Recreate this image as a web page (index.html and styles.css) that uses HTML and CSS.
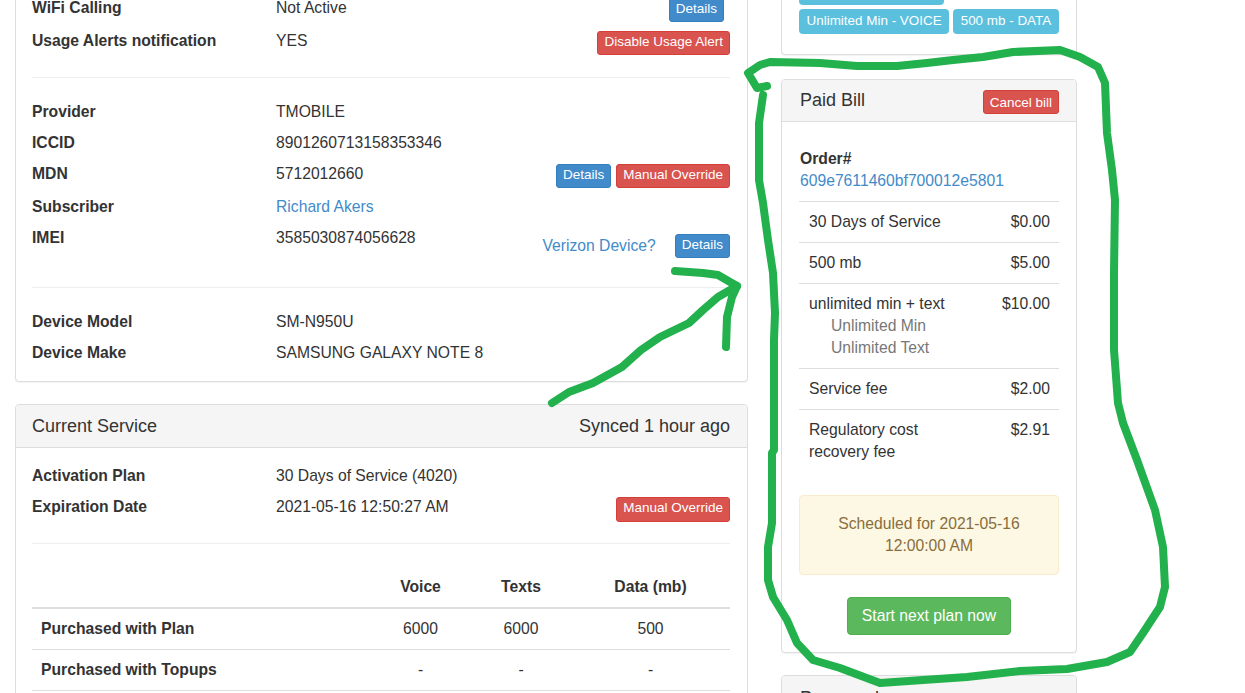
FILE: index.html
```html
<!DOCTYPE html>
<html lang="en">
<head>
<meta charset="utf-8">
<title>Subscriber line</title>
<link rel="stylesheet" href="styles.css">
</head>
<body>
<div class="page">
  <main class="main">
    <section class="panel">
      <div class="panel-body body-top">
        <div class="row row-wifi"><span class="lbl">WiFi Calling</span><span class="val">Not Active</span><span class="act"><a class="btn blue">Details</a></span></div>
        <div class="row row-usage"><span class="lbl">Usage Alerts notification</span><span class="val">YES</span><span class="act"><a class="btn red">Disable Usage Alert</a></span></div>
        <hr class="rule rule-a">
        <div class="row"><span class="lbl">Provider</span><span class="val">TMOBILE</span></div>
        <div class="row"><span class="lbl">ICCID</span><span class="val">8901260713158353346</span></div>
        <div class="row row-mdn"><span class="lbl">MDN</span><span class="val">5712012660</span><span class="act"><a class="btn blue">Details</a><a class="btn red">Manual Override</a></span></div>
        <div class="row"><span class="lbl">Subscriber</span><span class="val"><a class="link">Richard Akers</a></span></div>
        <div class="row row-imei"><span class="lbl">IMEI</span><span class="val">3585030874056628</span><span class="act act-low"><a class="link verizon">Verizon Device?</a><a class="btn blue">Details</a></span></div>
        <hr class="rule rule-b">
        <div class="row"><span class="lbl">Device Model</span><span class="val">SM-N950U</span></div>
        <div class="row row-last"><span class="lbl">Device Make</span><span class="val">SAMSUNG GALAXY NOTE 8</span></div>
      </div>
    </section>
    <section class="panel panel-service">
      <header class="panel-heading"><span class="title">Current Service</span><span class="title">Synced 1 hour ago</span></header>
      <div class="panel-body">
        <div class="row"><span class="lbl">Activation Plan</span><span class="val">30 Days of Service (4020)</span></div>
        <div class="row row-exp"><span class="lbl">Expiration Date</span><span class="val">2021-05-16 12:50:27 AM</span><span class="act"><a class="btn red btn-tall">Manual Override</a></span></div>
        <hr class="rule rule-c">
        <table class="usage">
          <thead><tr><th class="name"></th><th class="c1">Voice</th><th class="c2">Texts</th><th class="c3">Data (mb)</th></tr></thead>
          <tbody>
            <tr><th class="name">Purchased with Plan</th><td>6000</td><td>6000</td><td>500</td></tr>
            <tr><th class="name">Purchased with Topups</th><td>-</td><td>-</td><td>-</td></tr>
            <tr><th class="name">&nbsp;</th><td></td><td></td><td></td></tr>
          </tbody>
        </table>
      </div>
    </section>
  </main>
  <aside class="side">
    <section class="panel panel-plan">
      <div class="panel-body plan-body">
        <div class="labels">
          <span class="label label-wide"></span>
          <span class="label label-break"></span>
          <span class="label">Unlimited Min - VOICE</span>
          <span class="label">500 mb - DATA</span>
        </div>
      </div>
    </section>
    <section class="panel panel-bill">
      <header class="panel-heading heading-bill"><span class="title">Paid Bill</span><a class="btn red btn-cancel">Cancel bill</a></header>
      <div class="panel-body bill-body">
        <div class="order"><strong>Order#</strong><a class="link">609e7611460bf700012e5801</a></div>
        <div class="bill-row"><span>30 Days of Service</span><span>$0.00</span></div>
        <div class="bill-row"><span>500 mb</span><span>$5.00</span></div>
        <div class="bill-row"><span>unlimited min + text<span class="sub">Unlimited Min</span><span class="sub">Unlimited Text</span></span><span>$10.00</span></div>
        <div class="bill-row"><span>Service fee</span><span>$2.00</span></div>
        <div class="bill-row"><span class="wrap">Regulatory cost recovery fee</span><span>$2.91</span></div>
        <div class="alert">Scheduled for 2021-05-16<br>12:00:00 AM</div>
        <div class="cta"><a class="btn-start">Start next plan now</a></div>
      </div>
    </section>
    <section class="panel">
      <header class="panel-heading heading-last"><span class="title">Password</span></header>
    </section>
  </aside>
</div>
<svg class="ink" width="1245" height="693" viewBox="0 0 1245 693" aria-hidden="true">
  <path d="M767 86 L757 88 L748 73 L760 65 L770 62 L820 63 L857 66 L897 66 L927 63 L953 60 L983 57 L1013 52 L1060 50 L1080 57 L1098 67 L1105 83 L1107 133 L1112 170 L1115 200 L1114 273 L1114 350 L1115 363 L1118 403 L1123 423 L1137 460 L1155 510 L1163 547 L1165 587 L1160 607 L1143 633 L1130 652 L1107 662 L1067 669 L1020 671 L967 677 L923 680 L880 683 L840 668 L813 660 L797 643 L787 620 L773 597 L768 580 L768 547 L772 523 L772 453 L774 450 L774 340 L775 313 L773 273 L768 240 L763 203 L759 180 L759 123 L763 95"/>
  <path d="M552 403 L569 392 L593 383 L622 367 L641 350 L660 337 L689 323 L703 310 L718 297 L737 286 L718 275 L703 273 L675 271"/>
  <path d="M737 286 L732 297 L727 317 L726 347"/>
</svg>
</body>
</html>
```
FILE: styles.css
```css
* { box-sizing: border-box; }
html, body { margin: 0; height: 693px; overflow: hidden; background: #fff; }
body {
  font-family: "Liberation Sans", Arial, sans-serif;
  font-size: 15.7px;
  line-height: 22px;
  color: #333;
}
.page {
  display: flex;
  align-items: flex-start;
  gap: 33px;
  margin: -40px 0 0 15px;
  width: 1062px;
}
.main { width: 733px; flex: none; }
.side { width: 296px; flex: none; }
.panel {
  background: #fff;
  border: 1px solid #ddd;
  border-radius: 4px;
  box-shadow: 0 1px 1px rgba(0,0,0,.05);
  margin-bottom: 22px;
}
.panel-heading {
  display: flex;
  justify-content: space-between;
  align-items: center;
  height: 43px;
  padding: 0 17px 0 16px;
  background: #f5f5f5;
  border-bottom: 1px solid #ddd;
  border-radius: 3px 3px 0 0;
}
.title { font-size: 18px; }
.panel-body { padding: 17px 17px 0 16px; }
.body-top { padding-top: 36px; padding-bottom: 17px; }
.row { display: flex; align-items: flex-start; margin-bottom: 9px; }
.lbl { width: 244px; flex: none; font-weight: bold; }
.val { flex: 1; }
.act { display: flex; gap: 5px; align-items: flex-start; margin-left: auto; }
.act-low { margin-top: 7px; }
.row-wifi { margin-bottom: 11px; height: 22px; }
.row-wifi .act { margin-top: 1px; margin-right: 6px; }
.row-usage { height: 22px; margin-bottom: 0; }
.row-usage .act { margin-top: 1px; }
.row-mdn { height: 25px; margin-bottom: 8px; }
.row-mdn .act { margin-top: 1px; }
.row-imei { height: 32px; margin-bottom: 0; }
.row-exp { height: 26px; margin-bottom: 0; }
.row-exp .act { margin-top: 1px; }
.row-last { margin-bottom: 0; }
.rule { border: 0; border-top: 1px solid #eee; margin: 0; }
.rule-a { margin: 25px 0 23px; }
.rule-b { margin: 28px 0 23px; }
.rule-c { margin: 21px 0 23px; }
.btn {
  display: inline-block;
  height: 24px;
  line-height: 20px;
  padding: 0 6px;
  font-size: 13.5px;
  color: #fff;
  border: 1px solid;
  border-radius: 3px;
  white-space: nowrap;
}
.btn-tall { height: 25px; }
.btn-cancel { line-height: 24px; }
.blue { background: #428bca; border-color: #357ebd; }
.red { background: #d9534f; border-color: #d43f3a; }
.link { color: #428bca; }
.verizon { margin: 1px 14px 0 0; }
.usage { width: 100%; border-collapse: collapse; table-layout: fixed; }
.usage th, .usage td {
  padding: 9px;
  height: 41px;
  text-align: center;
  border-bottom: 1px solid #ddd;
}
.usage thead th { border-bottom: 2px solid #ddd; }
.usage .name { text-align: left; width: 338px; }
.usage .c1 { width: 101px; }
.usage .c2 { width: 100px; }
.usage .c3 { width: 159px; }
.panel-plan { margin-bottom: 24px; }
.plan-body { padding: 19px 17px 20px; }
.labels { display: flex; flex-wrap: wrap; gap: 4px; }
.label {
  display: inline-block;
  height: 25px;
  line-height: 23px;
  padding: 0 7.5px;
  font-size: 13.45px;
  color: #fff;
  background: #5bc0de;
  border-radius: 4px;
  white-space: nowrap;
}
.label-wide { width: 145px; }
.label-break { width: 105px; visibility: hidden; }
.heading-bill { height: 42px; padding: 0 17px; align-items: flex-start; }
.heading-bill .title { margin: 9px 0 0 1px; }
.heading-bill .btn { margin-top: 10px; }
.heading-last { padding: 0 17px; }
.heading-last .title { margin: 2px 0 0 1px; }
.bill-body { padding: 26px 17px 17px; }
.order { display: flex; flex-direction: column; margin-bottom: 9px; padding-left: 1px; }
.bill-row {
  display: flex;
  justify-content: space-between;
  align-items: flex-start;
  padding: 9px 9px 9px 10px;
  border-top: 1px solid #ddd;
}
.sub { display: block; padding-left: 22px; color: #777; }
.wrap { width: 170px; }
.alert {
  margin: 23px 0 22px;
  padding: 17px 16px;
  text-align: center;
  color: #8a6d3b;
  background: #fcf8e3;
  border: 1px solid #faebcc;
  border-radius: 4px;
}
.cta { display: flex; justify-content: center; }
.btn-start {
  display: block;
  width: 164px;
  height: 38px;
  line-height: 36px;
  text-align: center;
  color: #fff;
  background: #5cb85c;
  border: 1px solid #4cae4c;
  border-radius: 4px;
}
.ink {
  position: absolute;
  left: 0;
  top: 0;
  fill: none;
  stroke: #22b14c;
  stroke-width: 8;
  stroke-linecap: round;
  stroke-linejoin: round;
}
```
